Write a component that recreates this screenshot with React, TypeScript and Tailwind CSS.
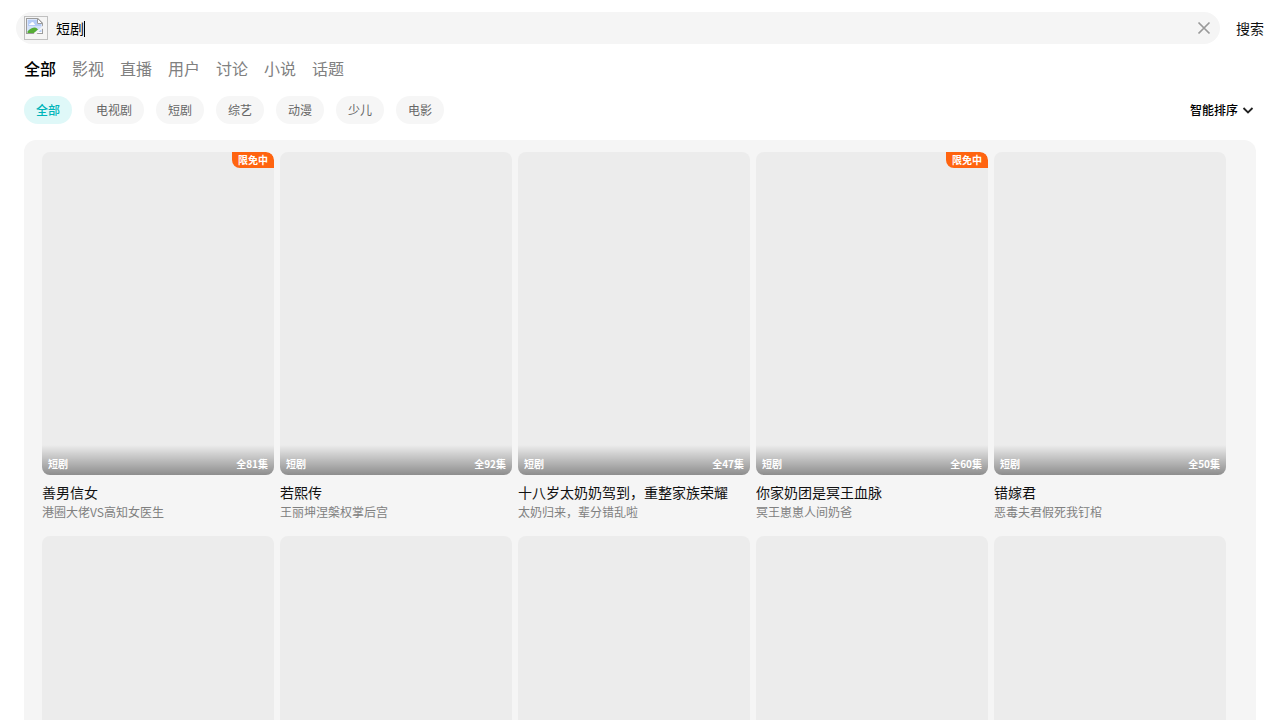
const tabs = ["全部", "影视", "直播", "用户", "讨论", "小说", "话题"];
const filters = ["全部", "电视剧", "短剧", "综艺", "动漫", "少儿", "电影"];

type Drama = { title: string; subtitle: string; episodes: number; free?: boolean };

const dramas: Drama[] = [
  { title: "善男信女", subtitle: "港圈大佬VS高知女医生", episodes: 81, free: true },
  { title: "若熙传", subtitle: "王丽坤涅槃权掌后宫", episodes: 92 },
  { title: "十八岁太奶奶驾到，重整家族荣耀", subtitle: "太奶归来，辈分错乱啦", episodes: 47 },
  { title: "你家奶团是冥王血脉", subtitle: "冥王崽崽人间奶爸", episodes: 60, free: true },
  { title: "错嫁君", subtitle: "恶毒夫君假死我钉棺", episodes: 50 },
];

function BrokenImage() {
  return (
    <span className="flex size-6 shrink-0 border border-[#c0c0c0] p-px">
      <svg width="18" height="16" viewBox="0 0 18 16" className="shrink-0">
        <path d="M0 0H12L17 5V16H0Z" fill="#9c9c9c" />
        <path d="M1 1H11.5L16 5.5V15H1Z" fill="#fff" />
        <path d="M1.5 1.5H11V6H15.5V14H1.5Z" fill="#b5ccf6" />
        <path d="M1.5 8H15.5V12H1.5Z" fill="#d4e1fa" />
        <path d="M3 7Q3 5.5 4.5 5.5Q5 4 6.5 4Q8 4 8 5.5Q9 6 9 7Z" fill="#fff" />
        <path d="M1.5 15V13.5Q5 9.5 9 9.5Q11 10 12 11.5L8 15Z" fill="#55ad35" />
        <path d="M11.5 0.5V5.5H16.5Z" fill="#fff" stroke="#9c9c9c" />
        <path d="M7.5 16L11 12.5L13 11.5L17 7.5V10.5L14 12.5L10.5 16Z" fill="#f5f5f5" />
      </svg>
    </span>
  );
}

function DramaCard({ drama }: { drama: Drama }) {
  return (
    <article className="w-[232px]">
      <div className="relative flex h-[323px] flex-col justify-end overflow-hidden rounded-lg bg-[#ececec]">
        {drama.free && (
          <span className="absolute top-0 right-0 h-4 rounded-tr-lg rounded-bl-lg bg-[#ff6410] px-1.5 text-[10px] leading-[15px] font-bold text-white">
            限免中
          </span>
        )}
        <div className="flex h-[30px] items-end justify-between bg-linear-to-b from-black/0 to-black/40 px-1.5 pb-1 text-[10px] leading-[14px] font-bold text-white">
          <span>短剧</span>
          <span>全{drama.episodes}集</span>
        </div>
      </div>
      <h3 className="mt-[7px] truncate text-sm leading-5 text-[#111]">{drama.title}</h3>
      <p className="mt-px truncate text-xs leading-[18px] text-[#808080]">{drama.subtitle}</p>
    </article>
  );
}

export default function App() {
  return (
    <main className="flex h-screen flex-col overflow-hidden bg-white font-['Noto_Sans_CJK_SC',sans-serif] text-black">
      <header className="flex items-center gap-4 px-4 pt-3">
        <div className="flex h-8 grow items-center rounded-full bg-[#f5f5f5] px-2">
          <BrokenImage />
          <span className="ml-2 text-sm leading-5">短剧</span>
          <span className="mt-0.5 h-4 w-px bg-black" />
          <svg className="ml-auto" width="16" height="16" viewBox="0 0 16 16" fill="none" stroke="#999" strokeWidth="1.7">
            <path d="M2.5 2.5L13.5 13.5M13.5 2.5L2.5 13.5" />
          </svg>
        </div>
        <button className="text-sm leading-5 text-[#111]">搜索</button>
      </header>
      <nav className="mt-[11px] flex gap-4 px-6 text-base leading-[26px]">
        {tabs.map((tab, i) => (
          <span key={tab} className={i === 0 ? "font-medium text-black" : "text-[#808080]"}>{tab}</span>
        ))}
      </nav>
      <div className="mt-[15px] flex h-7 items-center justify-between px-6">
        <div className="flex gap-3">
          {filters.map((filter, i) => (
            <span
              key={filter}
              className={
                i === 0
                  ? "h-7 rounded-full bg-[#dff8f8] px-3 text-xs leading-7 font-medium text-[#00b4b9]"
                  : "h-7 rounded-full bg-[#f6f6f6] px-3 text-xs leading-7 text-[#666]"
              }
            >
              {filter}
            </span>
          ))}
        </div>
        <div className="flex h-7 items-center gap-0.5 text-xs font-medium text-black">
          <span className="leading-7">智能排序</span>
          <svg width="16" height="16" viewBox="0 0 16 16" fill="none" stroke="#222" strokeWidth="1.8">
            <path d="M3.5 6L8 10.5L12.5 6" />
          </svg>
        </div>
      </div>
      <section className="mx-6 mt-4 grow rounded-t-xl bg-[#f5f5f5] pt-3 pl-[18px]">
        <div className="flex gap-1.5">
          {dramas.map((drama) => <DramaCard key={drama.title} drama={drama} />)}
        </div>
        <div className="mt-[15px] flex gap-1.5">
          {dramas.map((drama) => <div key={drama.title} className="h-[323px] w-[232px] rounded-lg bg-[#ececec]" />)}
        </div>
      </section>
    </main>
  );
}
